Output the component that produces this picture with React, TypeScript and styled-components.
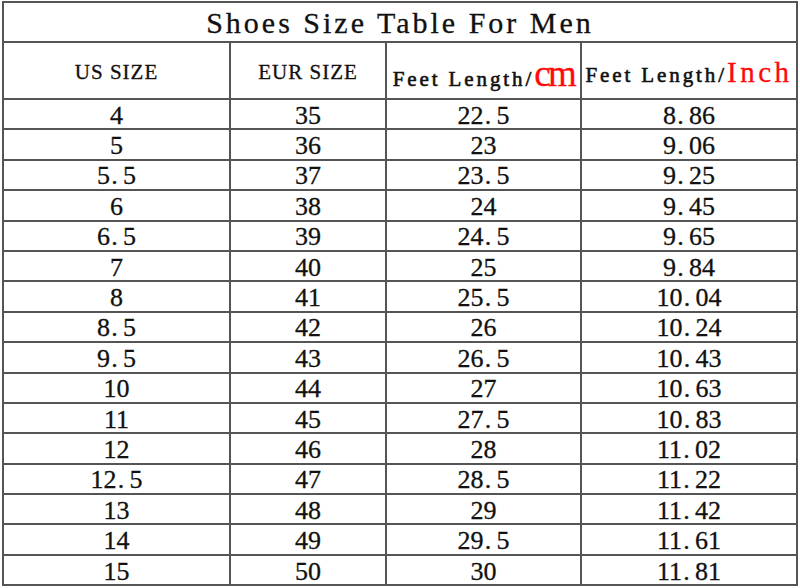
import React from "react";
import styled, { createGlobalStyle } from "styled-components";

const GlobalStyle = createGlobalStyle`
  html, body {
    margin: 0;
    padding: 0;
    background: #ffffff;
    overflow: hidden;
  }
`;

const LINE = "2px solid #555555";

const Sheet = styled.div`
  width: 796px;
  margin: 1px 0 0 2px;
  border-top: ${LINE};
  border-left: ${LINE};
  box-sizing: border-box;
  font-family: "Liberation Serif", serif;
  color: #111111;
  -webkit-text-stroke: 0.3px currentColor;
`;

const TitleRow = styled.div`
  height: 40px;
  display: flex;
  align-items: center;
  justify-content: center;
  border-right: ${LINE};
  border-bottom: ${LINE};
  box-sizing: border-box;
  font-size: 30px;
  letter-spacing: 3px;
  padding-top: 2px;
`;

const Grid = styled.div`
  display: grid;
  grid-template-columns: 227px 156px 195px 216px;
  grid-template-rows: 57px;
  grid-auto-rows: 30.4px;
`;

const HeadCell = styled.div<{ $low?: number }>`
  display: flex;
  justify-content: center;
  align-items: ${(p) => (p.$low !== undefined ? "flex-end" : "center")};
  padding-bottom: ${(p) => p.$low ?? 0}px;
  padding-top: ${(p) => (p.$low !== undefined ? 0 : 4)}px;
  border-right: ${LINE};
  border-bottom: ${LINE};
  box-sizing: border-box;
  white-space: nowrap;
  font-size: 21px;
  letter-spacing: 1px;
  line-height: 1;
`;

const HeadText = styled.span`
  line-height: 1;
`;

const Label = styled.span`
  font-size: 21px;
  letter-spacing: 2.9px;
  -webkit-text-stroke: 0.6px currentColor;
`;

const Unit = styled.span<{ $size: number; $spacing: number }>`
  color: #ff0a0a;
  font-size: ${(p) => p.$size}px;
  letter-spacing: ${(p) => p.$spacing}px;
`;

const Cell = styled.div`
  display: flex;
  justify-content: center;
  align-items: center;
  padding-top: 3px;
  border-right: ${LINE};
  border-bottom: ${LINE};
  box-sizing: border-box;
  font-size: 26px;
  line-height: 1;
`;

const Dot = styled.span`
  display: inline-block;
  width: 0.5em;
  text-indent: 0.05em;
`;

const rows: [string, string, string, string][] = [
  ["4", "35", "22.5", "8.86"],
  ["5", "36", "23", "9.06"],
  ["5.5", "37", "23.5", "9.25"],
  ["6", "38", "24", "9.45"],
  ["6.5", "39", "24.5", "9.65"],
  ["7", "40", "25", "9.84"],
  ["8", "41", "25.5", "10.04"],
  ["8.5", "42", "26", "10.24"],
  ["9.5", "43", "26.5", "10.43"],
  ["10", "44", "27", "10.63"],
  ["11", "45", "27.5", "10.83"],
  ["12", "46", "28", "11.02"],
  ["12.5", "47", "28.5", "11.22"],
  ["13", "48", "29", "11.42"],
  ["14", "49", "29.5", "11.61"],
  ["15", "50", "30", "11.81"],
];

const Num: React.FC<{ value: string }> = ({ value }) => {
  const [whole, frac] = value.split(".");
  if (frac === undefined) return <>{whole}</>;
  return (
    <>
      {whole}
      <Dot>.</Dot>
      {frac}
    </>
  );
};

export default function App() {
  return (
    <>
      <GlobalStyle />
      <Sheet>
        <TitleRow>Shoes Size Table For Men</TitleRow>
        <Grid>
          <HeadCell>US SIZE</HeadCell>
          <HeadCell>EUR SIZE</HeadCell>
          <HeadCell $low={6}>
            <HeadText>
              <Label>Feet Length/</Label>
              <Unit $size={37} $spacing={-2.5}>cm</Unit>
            </HeadText>
          </HeadCell>
          <HeadCell $low={11}>
            <HeadText>
              <Label>Feet Length/</Label>
              <Unit $size={29} $spacing={3.5}>Inch</Unit>
            </HeadText>
          </HeadCell>
          {rows.map((r) =>
            r.map((v, i) => (
              <Cell key={r[0] + "-" + i}>
                <Num value={v} />
              </Cell>
            ))
          )}
        </Grid>
      </Sheet>
    </>
  );
}
